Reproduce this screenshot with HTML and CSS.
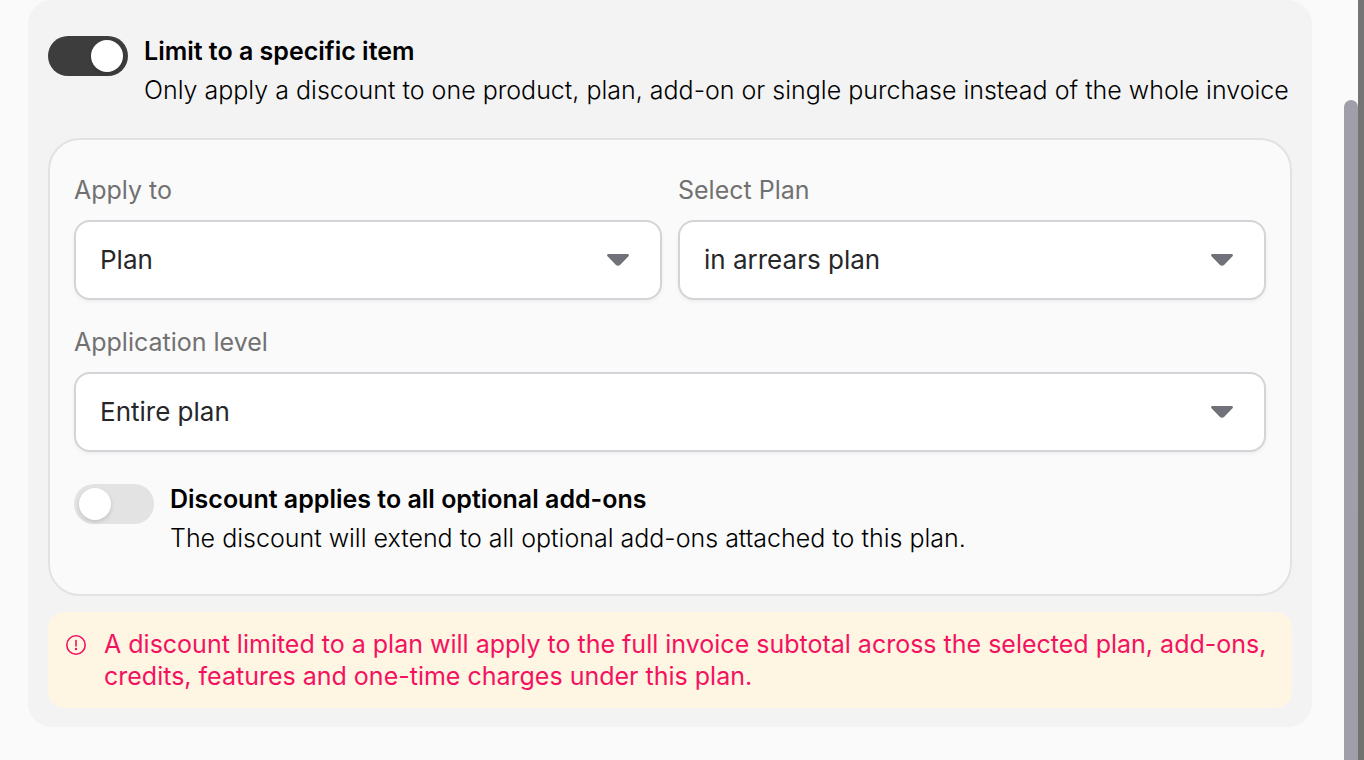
FILE: index.html
```html
<!DOCTYPE html>
<html lang="en">
<head>
<meta charset="utf-8">
<meta name="viewport" content="width=device-width, initial-scale=1">
<title>Discount settings</title>
<link rel="stylesheet" href="styles.css">
</head>
<body>
<div class="screen">
  <main class="dialog">
    <section class="panel">
      <div class="option">
        <input class="switch" type="checkbox" role="switch" id="limit" aria-describedby="limit-help" checked>
        <div class="option-text">
          <label class="option-title" for="limit">Limit to a specific item</label>
          <p class="option-help" id="limit-help">Only apply a discount to one product, plan, add-on or single purchase instead of the whole invoice</p>
        </div>
      </div>

      <div class="card">
        <div class="fields">
          <div class="field">
            <label class="field-label" for="apply-to">Apply to</label>
            <div class="select-wrap">
              <select class="select" id="apply-to"><option>Plan</option></select>
              <svg class="caret" viewBox="0 0 22 12" aria-hidden="true"><path d="M1.5 0h19c1.3 0 1.9 1.4 1 2.3l-8.2 8.5c-1.4 1.4-3.2 1.4-4.6 0L.5 2.3C-.4 1.4.2 0 1.5 0z"/></svg>
            </div>
          </div>
          <div class="field">
            <label class="field-label" for="plan">Select Plan</label>
            <div class="select-wrap">
              <select class="select" id="plan"><option>in arrears plan</option></select>
              <svg class="caret" viewBox="0 0 22 12" aria-hidden="true"><path d="M1.5 0h19c1.3 0 1.9 1.4 1 2.3l-8.2 8.5c-1.4 1.4-3.2 1.4-4.6 0L.5 2.3C-.4 1.4.2 0 1.5 0z"/></svg>
            </div>
          </div>
          <div class="field field-wide">
            <label class="field-label" for="level">Application level</label>
            <div class="select-wrap">
              <select class="select" id="level"><option>Entire plan</option></select>
              <svg class="caret" viewBox="0 0 22 12" aria-hidden="true"><path d="M1.5 0h19c1.3 0 1.9 1.4 1 2.3l-8.2 8.5c-1.4 1.4-3.2 1.4-4.6 0L.5 2.3C-.4 1.4.2 0 1.5 0z"/></svg>
            </div>
          </div>
        </div>
        <div class="option">
          <input class="switch" type="checkbox" role="switch" id="addons" aria-describedby="addons-help">
          <div class="option-text">
            <label class="option-title" for="addons">Discount applies to all optional add-ons</label>
            <p class="option-help" id="addons-help">The discount will extend to all optional add-ons attached to this plan.</p>
          </div>
        </div>
      </div>

      <div class="notice" role="note">
        <svg class="notice-icon" viewBox="0 0 24 24" aria-hidden="true"><circle cx="12" cy="12" r="9.2"/><path d="M12 7.5v5.5"/><circle class="dot" cx="12" cy="16" r="1.2"/></svg>
        <p class="notice-text">A discount limited to a plan will apply to the full invoice subtotal across the selected plan, add-ons, credits, features and one-time charges under this plan.</p>
      </div>
    </section>
  </main>
  <div class="track"><div class="thumb"></div></div>
  <div class="backdrop"></div>
</div>
</body>
</html>
```

FILE: styles.css
```css
* {
  box-sizing: border-box;
}

body {
  margin: 0;
  background: #fafafa;
  color: #0a0a0a;
  font-family: Inter, "Liberation Sans", sans-serif;
  font-size: 25px;
  line-height: 32px;
}

p {
  margin: 0;
}

.screen {
  display: flex;
  min-height: 100vh;
}

.dialog {
  flex: 1;
  min-width: 0;
  padding: 0 32px 32px 28px;
}

.track {
  display: flex;
  width: 14px;
  padding-top: 100px;
}

.thumb {
  flex: 1;
  border-radius: 7px 7px 0 0;
  background: #a09fa9;
}

.backdrop {
  width: 6px;
  background: linear-gradient(#757575, #70726f);
}

.panel {
  padding: 36px 20px 19px;
  border-radius: 24px;
  background: #f3f3f3;
}

.option {
  display: flex;
  gap: 16px;
}

.option-text {
  display: flex;
  flex-direction: column;
  gap: 8px;
  min-width: 0;
}

.option-title {
  font-weight: 560;
  line-height: 30px;
  color: #000;
}

.option-help {
  font-weight: 280;
  color: #000;
}

.switch {
  appearance: none;
  flex: none;
  display: flex;
  width: 80px;
  height: 40px;
  margin: 0;
  padding: 4px 5px;
  border-radius: 20px;
  background: #e3e3e3;
}

.switch::before {
  content: "";
  width: 32px;
  height: 32px;
  border-radius: 50%;
  background: #fff;
  box-shadow: 0 2px 4px rgba(0, 0, 0, 0.15);
}

.switch:checked {
  justify-content: flex-end;
  background: #3d3d3d;
}

.card {
  margin-top: 32px;
  padding: 34px 24px 40px;
  border: 2px solid #e2e2e2;
  border-radius: 32px;
  background: #fafafa;
}

.fields {
  display: grid;
  grid-template-columns: 1fr 1fr;
  gap: 26px 16px;
  margin-bottom: 32px;
}

.field {
  display: flex;
  flex-direction: column;
  gap: 14px;
}

.field-wide {
  grid-column: 1 / -1;
}

.field-label {
  font-weight: 380;
  color: #717171;
}

.select-wrap {
  position: relative;
}

.select {
  appearance: none;
  display: block;
  width: 100%;
  height: 80px;
  padding: 0 72px 0 24px;
  border: 2px solid #d4d4d8;
  border-radius: 16px;
  background: #fff;
  box-shadow: 0 2px 4px rgba(0, 0, 0, 0.05);
  color: #27272a;
  font: inherit;
  font-size: 26px;
}

.caret {
  position: absolute;
  top: 34px;
  right: 33px;
  width: 22px;
  height: 12px;
  fill: #71717a;
  pointer-events: none;
}

.notice {
  display: flex;
  gap: 16px;
  margin-top: 16px;
  padding: 16px;
  border-radius: 16px;
  background: #fff5e3;
  color: #f31260;
}

.notice-icon {
  flex: none;
  width: 24px;
  height: 24px;
  margin-top: 5px;
  fill: none;
  stroke: currentColor;
  stroke-width: 1.6;
  stroke-linecap: round;
}

.notice-icon .dot {
  fill: currentColor;
  stroke: none;
}

.notice-text {
  font-weight: 380;
}
```
